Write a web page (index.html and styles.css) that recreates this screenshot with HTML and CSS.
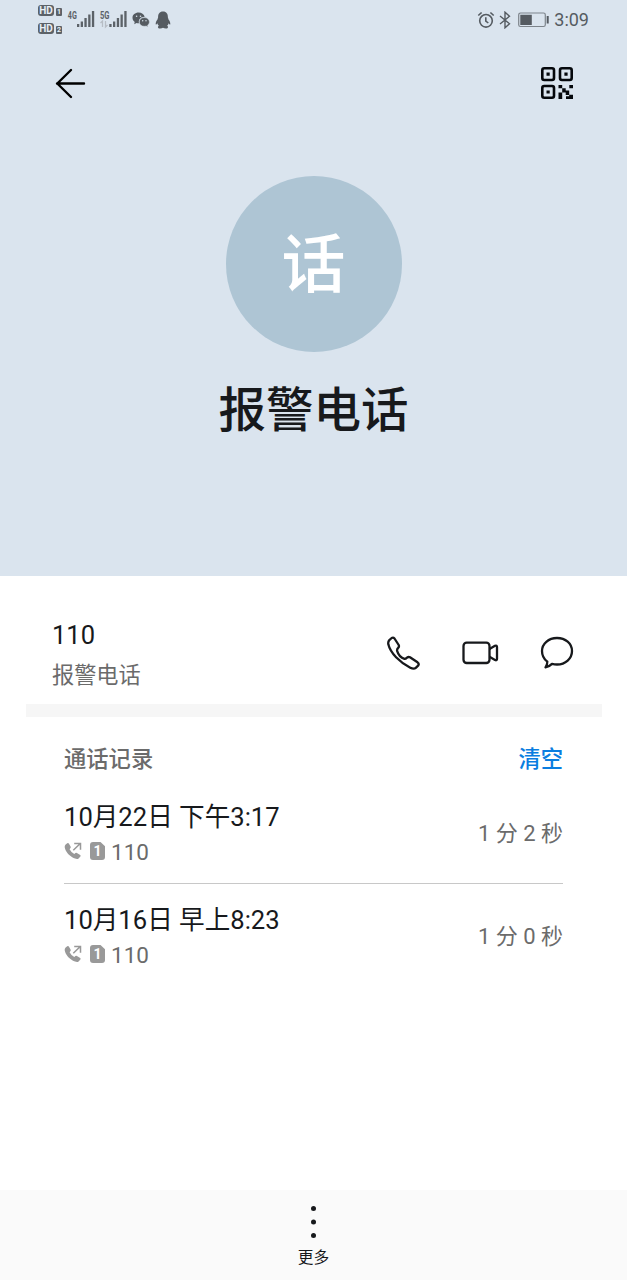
FILE: index.html
```html
<!DOCTYPE html>
<html lang="zh-CN">
<head>
<meta charset="utf-8">
<title>报警电话</title>
<link rel="stylesheet" href="styles.css">
</head>
<body>
<svg class="defs" width="0" height="0">
  <symbol id="outgoing" viewBox="0 0 18 18">
    <path d="M1.4 2.8 L3.2 1.3 Q4.3.6 5 1.7 L6.7 4.8 Q7 5.7 6.3 6.3 L5.6 7.2 Q7 10.200 10.300 11.900 L11.400 11.100 Q12.100 10.500 12.900 11 L16.200 13 Q17 13.700 16.400 14.600 L14.600 16.500 Q13.300 17.500 11 16.600 C5.6 14.500 1.5 10 .7 5.3 Q.5 3.800 1.400 2.800Z" fill="#999"/>
    <path d="M9.300 8.300 L16 1.700 M10.200 1.500 H16.500 V7.800" fill="none" stroke="#999" stroke-width="1.500"/>
  </symbol>
</svg>
<main class="screen">
  <section class="hero">
    <header class="status">
      <div class="status-left">
        <div class="hd-stack">
          <div class="hd"><b class="hd-tag">HD</b><b class="hd-num">1</b></div>
          <div class="hd"><b class="hd-tag">HD</b><b class="hd-num">2</b></div>
        </div>
        <svg class="signals" width="62" height="22" viewBox="0 0 62 22">
          <g class="net"><text x="0.8" y="10" textLength="9" lengthAdjust="spacingAndGlyphs">4G</text><text x="33" y="10" textLength="9.5" lengthAdjust="spacingAndGlyphs">5G</text></g>
          <g fill="#5c6268">
            <path d="M10 15h2.300v3h-2.300z M13.700 12.500h2.300v5.500h-2.300z M17.400 9h2.300v9h-2.300z M21.200 5.500h2.300v12.500h-2.300z M24.900 2h2.300v16h-2.300z"/>
            <path d="M42.300 15h2.300v3h-2.300z M46 12.500h2.300v5.500h-2.300z M49.800 9h2.300v9h-2.300z M53.500 5.500h2.300v12.500h-2.300z M57.300 2h2.300v16h-2.300z"/>
          </g>
          <path d="M35.500 18v-6l-2 2 M38.500 12v6l2-2" fill="none" stroke="#b7bdc5" stroke-width="1.300"/>
        </svg>
        <svg class="wechat" width="18" height="16" viewBox="0 0 18 16">
          <path d="M6.600 .600 C3.100 .600 .500 2.900 .500 5.700 C.500 7.500 1.300 8.900 2.700 9.900 L2.200 12.200 L4.600 11 Q5.800 11.300 7 11.200 C6.100 7.600 8.800 4.800 12.700 4.800 C12 2.300 9.600 .600 6.600 .600Z" fill="#555b61"/>
          <path d="M12.200 5.500 C9.200 5.500 7.300 7.600 7.300 9.900 S9.200 14.300 12.200 14.300 Q13.200 14.300 14.100 14 L16.100 15.100 L15.600 13.200 C16.800 12.300 17.400 11.200 17.400 9.900 C17.400 7.500 15.100 5.500 12.200 5.500Z" fill="#555b61" stroke="#dae4ee" stroke-width=".5"/>
          <g fill="#dae4ee"><circle cx="4.600" cy="4.200" r=".8"/><circle cx="8.500" cy="4.200" r=".8"/><circle cx="10.700" cy="8.700" r=".7"/><circle cx="14" cy="8.700" r=".7"/></g>
        </svg>
        <svg class="qq" width="16" height="18" viewBox="0 0 16 18">
          <path d="M8 .5C4.500.5 3 3 3.100 6.500C2.800 7.300 2.600 7.600 2.600 8.300C1.300 9.900.500 12 .7 13.200C.9 14 1.700 13.100 2.400 12.200Q2.700 13.700 3.900 14.700C2.600 15.200 2.400 17.500 5 17.500Q7 17.500 8 16.700Q9 17.500 11 17.500C13.600 17.500 13.400 15.200 12.100 14.700Q13.300 13.700 13.600 12.200C14.300 13.100 15.100 14 15.300 13.200C15.500 12 14.700 9.900 13.400 8.300C13.400 7.600 13.200 7.300 12.900 6.500C13 3 11.500.5 8 .5Z" fill="#555b61"/>
        </svg>
      </div>
      <div class="status-right">
        <svg width="18" height="18" viewBox="0 0 18 18" fill="none" stroke="#555b61">
          <circle cx="9" cy="9.800" r="6.300" stroke-width="1.600"/><path d="M8.800 6.300v3.700l2.500 2 M1.300 4.500 4.600 1.500 M16.700 4.500 13.400 1.500" stroke-width="1.600"/>
        </svg>
        <svg class="bt" width="12" height="18" viewBox="0 0 12 18"><path d="M1 5 10.500 12.800 6 16.800V1.200L10.500 5.200 1 13" fill="none" stroke="#555b61" stroke-width="1.400"/></svg>
        <svg class="battery" width="32" height="16" viewBox="0 0 32 16"><rect x=".7" y="1" width="26.600" height="13.500" rx="1.800" fill="none" stroke="#7d848b" stroke-width="1.200"/><path d="M2.300 2.700h11.500v10.200H2.300z M28.700 4h2v7.500h-2z" fill="#555b61"/></svg>
        <span class="clock">3:09</span>
      </div>
    </header>
    <nav class="toolbar">
      <svg width="32" height="32" viewBox="0 0 32 32" fill="none" stroke="#000" stroke-width="2.400" stroke-linecap="round" stroke-linejoin="round"><path d="M29 16.500H2 M16 3 2.300 16.500 16 30"/></svg>
      <svg width="34" height="34" viewBox="0 0 34 34">
        <g fill="none" stroke="#05080c" stroke-width="2.600"><rect x="2.300" y="2.300" width="11.700" height="11.700" rx="2"/><rect x="20" y="2.300" width="11.700" height="11.700" rx="2"/><rect x="2.300" y="20" width="11.700" height="11.700" rx="2"/></g>
        <path d="M6.500 6.500h3.200v3.200H6.500z M24.400 6.500h3.200v3.200h-3.200z M6.500 24.400h3.200v3.200H6.500z M18.500 19h3.700v3.200h-3.700z M29.300 19h3.700v3.200h-3.700z M22.200 22.200h3.500v2.400h3.500v4.400h-3.500v-2.500h-3.500z M18.500 26.500h3.700v6.500h-3.700z M29.200 28.800h3.800v4.200h-7v-2.700h3.200z" fill="#05080c"/>
      </svg>
    </nav>
    <div class="avatar">话</div>
    <h1 class="name">报警电话</h1>
  </section>

  <section class="contact">
    <div class="contact-text">
      <div class="number">110</div>
      <div class="label">报警电话</div>
    </div>
    <div class="actions">
      <svg width="36" height="36" viewBox="-1 -.5 36 36" fill="none" stroke="#17191c" stroke-width="2.300" stroke-linejoin="round"><path d="M3.300 4.600 L5.700 2.500 Q7.200 1.500 8.500 3 L12.700 9.500 Q13.400 11 12.300 12.300 Q10.900 13.300 11.100 15.300 C12.300 19.200 15.500 22.400 18.500 23.400 Q19.800 23.400 21 22.100 Q22.400 21 24 21.800 L31.500 26.800 Q33.500 28.400 32.100 30.200 L29.800 32.400 Q27.800 34 24.300 32.200 C13.500 26.700 4.500 17.700 2.300 8.800 Q1.900 6 3.300 4.600Z"/></svg>
      <svg width="38" height="36" viewBox="0 0 38 36" fill="none" stroke="#17191c" stroke-width="2.300" stroke-linejoin="round"><rect x="2.500" y="7.700" width="26" height="20.300" rx="3.200"/><path d="M28.500 14 34 10.800Q36 10 36 12V23.800Q36 25.800 34 25L28.500 21.800"/></svg>
      <svg width="36" height="36" viewBox="0 0 36 36" fill="none" stroke="#17191c" stroke-width="2.300" stroke-linejoin="round"><path d="M18 3C9.500 3 3 8.700 3 16C3 20.500 4.800 24 8.300 26.700Q8.500 29.500 6.500 32.300Q10.300 31.700 13 28.900Q15.500 29.500 18 29.500C26.500 29.500 33 23.500 33 16S26.500 3 18 3Z"/></svg>
    </div>
  </section>
  <div class="band"></div>

  <section class="history">
    <div class="history-head"><h2>通话记录</h2><a class="clear">清空</a></div>
    <article class="call">
      <div>
        <div class="when">10月22日 下午3:17</div>
        <div class="meta"><svg width="18" height="18"><use href="#outgoing"/></svg><span class="sim">1</span><span>110</span></div>
      </div>
      <div class="duration">1 分 2 秒</div>
    </article>
    <article class="call">
      <div>
        <div class="when">10月16日 早上8:23</div>
        <div class="meta"><svg width="18" height="18"><use href="#outgoing"/></svg><span class="sim">1</span><span>110</span></div>
      </div>
      <div class="duration">1 分 0 秒</div>
    </article>
  </section>

  <footer class="footer">
    <svg width="8" height="34" viewBox="0 0 8 34" fill="#17191c"><circle cx="3.500" cy="3.500" r="2.500"/><circle cx="3.500" cy="17" r="2.500"/><circle cx="3.500" cy="30.500" r="2.500"/></svg>
    <span>更多</span>
  </footer>
</main>
</body>
</html>
```
FILE: styles.css
```css
* { box-sizing: border-box; }
body { margin: 0; background: #fff; font-family: Roboto, "Noto Sans CJK SC", sans-serif; color: #17191c; }
svg { display: block; flex: none; }
.defs { position: absolute; }
.screen { width: 627px; height: 1280px; display: flex; flex-direction: column; }

.hero { height: 576px; background: #dae4ee; display: flex; flex-direction: column; align-items: center; }
.status { width: 100%; height: 40px; padding: 0 38px; display: flex; justify-content: space-between; }
.status-left, .status-right { display: flex; align-items: center; }
.hd-stack { width: 29px; display: flex; flex-direction: column; gap: 7px; padding-bottom: 1px; }
.hd { display: flex; align-items: flex-end; gap: 2px; height: 11px; }
.hd-tag { width: 16px; height: 11px; border-radius: 3px; background: #5c6268; color: #e8eff6; font-size: 10px; line-height: 11px; text-align: center; }
.hd-num { width: 6px; height: 8px; border-radius: 1px; background: #5c6268; color: #e8eff6; font-size: 7px; line-height: 8px; text-align: center; }
.net { font: bold 10px Roboto, sans-serif; fill: #5c6268; }
.wechat { margin-left: 3px; }
.qq { margin-left: 5px; }
.bt { margin-left: 4px; }
.battery { margin-left: 7px; }
.clock { margin-left: 4px; font-size: 18px; line-height: 40px; color: #555b61; }
.toolbar { width: 100%; height: 86px; padding: 0 53px 0 55px; display: flex; align-items: center; justify-content: space-between; }
.avatar { width: 176px; height: 176px; margin-top: 50px; border-radius: 50%; background: #aec5d4; color: #fff; font-size: 64px; font-weight: 500; line-height: 180px; text-align: center; }
.name { margin: 24px 0 0; font-size: 47.5px; font-weight: 500; line-height: 70px; }

.contact { height: 128px; padding: 41px 52px 0; display: flex; justify-content: space-between; }
.number { font-size: 25.5px; line-height: 36px; }
.label { margin-top: 6px; font-size: 22.2px; line-height: 32px; color: #6b6b6b; }
.actions { display: flex; gap: 40px; padding-top: 18px; }
.band { height: 13px; margin: 0 25px 0 26px; background: #f6f6f6; }

.history { padding: 23px 64px 0; flex: 1; }
.history-head { display: flex; justify-content: space-between; font-size: 22.3px; line-height: 38px; }
.history-head h2 { margin: 0; font-size: inherit; font-weight: 500; color: #6b6b6b; }
.clear { font-weight: 500; color: #0a7de0; }
.call { height: 105px; padding-top: 18px; display: flex; justify-content: space-between; }
.call + .call { padding-top: 15px; border-top: 1px solid #c8c8c8; }
.when { font-size: 25.6px; line-height: 42px; }
.meta { margin-top: -1px; display: flex; align-items: center; font-size: 22.5px; line-height: 30px; color: #6b6b6b; }
.meta svg, .sim { margin-bottom: 2px; }
.sim { width: 15px; height: 18px; margin-left: 8px; margin-right: 6px; border-radius: 3px; background: #999; color: #fff; font-size: 14px; font-weight: 700; line-height: 18px; text-align: center; clip-path: polygon(0 0, 70% 0, 100% 24%, 100% 100%, 0 100%); }
.duration { padding-top: 18px; font-size: 22px; line-height: 40px; color: #6b6b6b; }

.footer { height: 90px; background: #fafafa; padding-top: 15px; display: flex; flex-direction: column; align-items: center; font-size: 15.7px; line-height: 37px; }
```
